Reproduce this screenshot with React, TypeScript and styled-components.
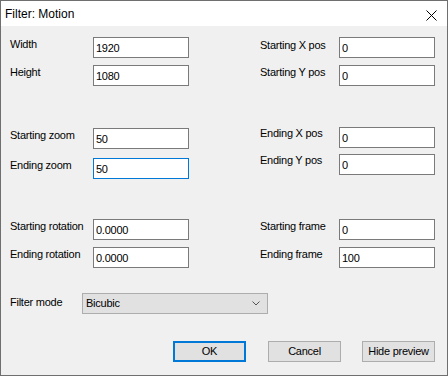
import React from "react";
import styled, { createGlobalStyle } from "styled-components";

const Global = createGlobalStyle`
  html, body { margin: 0; padding: 0; background: #f0f0f0; }
  * { box-sizing: border-box; }
`;

const Window = styled.div`
  width: 448px;
  height: 376px;
  border: 1px solid #6f6f6f;
  background: #f0f0f0;
  display: flex;
  flex-direction: column;
  font-family: "Liberation Sans", Arial, sans-serif;
  font-size: 11px;
  letter-spacing: -0.25px;
  color: #000;
`;

const TitleBar = styled.div`
  height: 25px;
  background: #fff;
  display: flex;
  align-items: center;
  justify-content: space-between;
  padding-left: 4px;
  padding-right: 10px;
`;

const Title = styled.span`
  font-size: 12px;
  letter-spacing: 0;
  line-height: 14px;
  margin-top: 1px;
`;

const CloseIcon = styled.svg`
  display: block;
  width: 11px;
  height: 11px;
  margin-top: 3px;
`;

const Body = styled.div`
  padding: 11px 0 0 9px;
  display: flex;
  flex-direction: column;
`;

const Columns = styled.div`
  display: flex;
`;

const Column = styled.div<{ $w: number }>`
  width: ${(p) => p.$w}px;
  display: flex;
  flex-direction: column;
`;

const Field = styled.div<{ $mt?: number }>`
  display: flex;
  align-items: flex-start;
  margin-top: ${(p) => p.$mt ?? 0}px;
`;

const Label = styled.label<{ $w: number; $pt?: number }>`
  width: ${(p) => p.$w}px;
  flex: none;
  line-height: 13px;
  padding-top: ${(p) => p.$pt ?? 1}px;
  white-space: nowrap;
`;

const TextBox = styled.input<{ $focused?: boolean }>`
  width: 96px;
  height: 21px;
  margin: 0;
  padding: 3px 2px 3px 2px;
  border: 1px solid ${(p) => (p.$focused ? "#0078d7" : "#7a7a7a")};
  background: #fff;
  font-family: "Liberation Sans", Arial, sans-serif;
  font-size: 11px;
  letter-spacing: -0.25px;
  line-height: 13px;
  color: #000;
  outline: none;
  border-radius: 0;
`;

const ModeRow = styled.div`
  display: flex;
  align-items: flex-start;
  margin-top: 25px;
`;

const Combo = styled.div`
  width: 186px;
  height: 21px;
  border: 1px solid #adadad;
  background: #e1e1e1;
  display: flex;
  align-items: center;
  justify-content: space-between;
  padding: 0 7px 0 3px;
  line-height: 13px;
`;

const Chevron = styled.svg`
  display: block;
  width: 8px;
  height: 5px;
`;

const ButtonRow = styled.div`
  display: flex;
  margin-top: 27px;
  padding-left: 163px;
`;

const Button = styled.button<{ $default?: boolean; $ml?: number }>`
  width: 73px;
  height: 21px;
  margin: 0 0 0 ${(p) => p.$ml ?? 0}px;
  padding: 0;
  border: ${(p) => (p.$default ? "2px solid #0078d7" : "1px solid #adadad")};
  background: #e1e1e1;
  font-family: "Liberation Sans", Arial, sans-serif;
  font-size: 11px;
  letter-spacing: -0.25px;
  line-height: 13px;
  color: #000;
  border-radius: 0;
`;

type F = { label: string; value: string; mt?: number; lt?: number; focused?: boolean };

const left: F[] = [
  { label: "Width", value: "1920", mt: 0 },
  { label: "Height", value: "1080", mt: 7 },
  { label: "Starting zoom", value: "50", mt: 42 },
  { label: "Ending zoom", value: "50", mt: 9, focused: true },
  { label: "Starting rotation", value: "0.0000", mt: 40 },
  { label: "Ending rotation", value: "0.0000", mt: 7 },
];

const right: F[] = [
  { label: "Starting X pos", value: "0", mt: 0, lt: 2 },
  { label: "Starting Y pos", value: "0", mt: 7 },
  { label: "Ending X pos", value: "0", mt: 41, lt: 0 },
  { label: "Ending Y pos", value: "0", mt: 6, lt: 0 },
  { label: "Starting frame", value: "0", mt: 44 },
  { label: "Ending frame", value: "100", mt: 7 },
];

export default function App() {
  return (
    <>
      <Global />
      <Window>
        <TitleBar>
          <Title>Filter: Motion</Title>
          <CloseIcon viewBox="0 0 11 11">
            <path d="M0.5 0.5 L10.5 10.5 M10.5 0.5 L0.5 10.5" stroke="#000" strokeWidth="1" fill="none" />
          </CloseIcon>
        </TitleBar>
        <Body>
          <Columns>
            <Column $w={250}>
              {left.map((f) => (
                <Field key={f.label} $mt={f.mt}>
                  <Label $w={83} $pt={f.lt}>{f.label}</Label>
                  <TextBox defaultValue={f.value} $focused={f.focused} readOnly />
                </Field>
              ))}
            </Column>
            <Column $w={180}>
              {right.map((f) => (
                <Field key={f.label} $mt={f.mt}>
                  <Label $w={79} $pt={f.lt}>{f.label}</Label>
                  <TextBox defaultValue={f.value} readOnly />
                </Field>
              ))}
            </Column>
          </Columns>
          <ModeRow>
            <Label $w={72} $pt={3}>Filter mode</Label>
            <Combo>
              <span>Bicubic</span>
              <Chevron viewBox="0 0 8 5">
                <path d="M0.5 0.5 L4 4 L7.5 0.5" stroke="#555" strokeWidth="1" fill="none" />
              </Chevron>
            </Combo>
          </ModeRow>
          <ButtonRow>
            <Button $default>OK</Button>
            <Button $ml={22}>Cancel</Button>
            <Button $ml={21}>Hide preview</Button>
          </ButtonRow>
        </Body>
      </Window>
    </>
  );
}
